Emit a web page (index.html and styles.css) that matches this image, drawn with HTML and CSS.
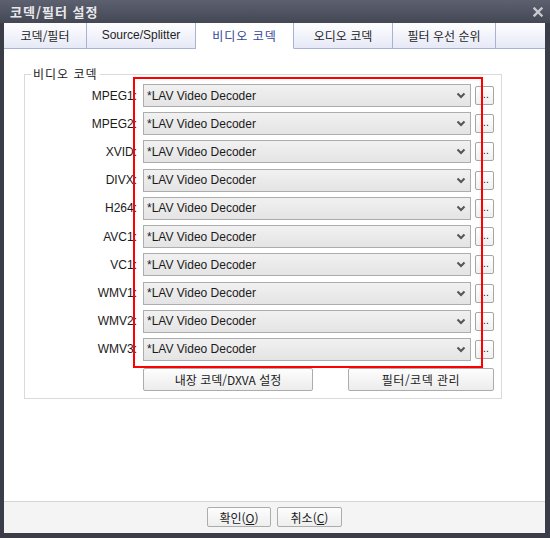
FILE: index.html
```html
<!DOCTYPE html>
<html lang="ko">
<head>
<meta charset="utf-8">
<title>코덱/필터 설정</title>
<link rel="stylesheet" href="styles.css">
</head>
<body>
<div class="window">
  <div class="titlebar">
    <span class="title">코덱/필터 설정</span>
    <svg class="close" width="10" height="10" viewBox="0 0 10 10"><path d="M1.5 1.5 L8.5 8.5 M8.5 1.5 L1.5 8.5" stroke="#c9cacf" stroke-width="2.4" stroke-linecap="square"/></svg>
  </div>
  <div class="frame">
    <div class="tabs">
      <div class="tab">코덱/필터</div>
      <div class="tab">Source/Splitter</div>
      <div class="tab active">비디오 코덱</div>
      <div class="tab">오디오 코덱</div>
      <div class="tab">필터 우선 순위</div>
      <div class="tab filler"></div>
    </div>
    <div class="page">
      <div class="group">
        <span class="legend">비디오 코덱</span>
        <div class="rows">
          <span class="label">MPEG1:</span><div class="combo"><span>*LAV Video Decoder</span><svg class="chev" width="10" height="7" viewBox="0 0 10 7"><path d="M1.5 1.5 L5 5 L8.5 1.5" fill="none" stroke="#555" stroke-width="2"/></svg></div><div class="more">...</div>
          <span class="label">MPEG2:</span><div class="combo"><span>*LAV Video Decoder</span><svg class="chev" width="10" height="7" viewBox="0 0 10 7"><path d="M1.5 1.5 L5 5 L8.5 1.5" fill="none" stroke="#555" stroke-width="2"/></svg></div><div class="more">...</div>
          <span class="label">XVID:</span><div class="combo"><span>*LAV Video Decoder</span><svg class="chev" width="10" height="7" viewBox="0 0 10 7"><path d="M1.5 1.5 L5 5 L8.5 1.5" fill="none" stroke="#555" stroke-width="2"/></svg></div><div class="more">...</div>
          <span class="label">DIVX:</span><div class="combo"><span>*LAV Video Decoder</span><svg class="chev" width="10" height="7" viewBox="0 0 10 7"><path d="M1.5 1.5 L5 5 L8.5 1.5" fill="none" stroke="#555" stroke-width="2"/></svg></div><div class="more">...</div>
          <span class="label">H264:</span><div class="combo"><span>*LAV Video Decoder</span><svg class="chev" width="10" height="7" viewBox="0 0 10 7"><path d="M1.5 1.5 L5 5 L8.5 1.5" fill="none" stroke="#555" stroke-width="2"/></svg></div><div class="more">...</div>
          <span class="label">AVC1:</span><div class="combo"><span>*LAV Video Decoder</span><svg class="chev" width="10" height="7" viewBox="0 0 10 7"><path d="M1.5 1.5 L5 5 L8.5 1.5" fill="none" stroke="#555" stroke-width="2"/></svg></div><div class="more">...</div>
          <span class="label">VC1:</span><div class="combo"><span>*LAV Video Decoder</span><svg class="chev" width="10" height="7" viewBox="0 0 10 7"><path d="M1.5 1.5 L5 5 L8.5 1.5" fill="none" stroke="#555" stroke-width="2"/></svg></div><div class="more">...</div>
          <span class="label">WMV1:</span><div class="combo"><span>*LAV Video Decoder</span><svg class="chev" width="10" height="7" viewBox="0 0 10 7"><path d="M1.5 1.5 L5 5 L8.5 1.5" fill="none" stroke="#555" stroke-width="2"/></svg></div><div class="more">...</div>
          <span class="label">WMV2:</span><div class="combo"><span>*LAV Video Decoder</span><svg class="chev" width="10" height="7" viewBox="0 0 10 7"><path d="M1.5 1.5 L5 5 L8.5 1.5" fill="none" stroke="#555" stroke-width="2"/></svg></div><div class="more">...</div>
          <span class="label">WMV3:</span><div class="combo"><span>*LAV Video Decoder</span><svg class="chev" width="10" height="7" viewBox="0 0 10 7"><path d="M1.5 1.5 L5 5 L8.5 1.5" fill="none" stroke="#555" stroke-width="2"/></svg></div><div class="more">...</div>
        </div>
        <div class="actions">
          <div class="btn btn-wide">내장 코덱/DXVA 설정</div>
          <div class="btn btn-mid">필터/코덱 관리</div>
        </div>
        <div class="highlight"></div>
      </div>
    </div>
    <div class="footer">
      <div class="btn btn-ok">확인(<u>O</u>)</div>
      <div class="btn btn-cancel">취소(<u>C</u>)</div>
    </div>
  </div>
</div>
</body>
</html>
```
FILE: styles.css
```css
* { box-sizing: border-box; }
html, body { margin: 0; padding: 0; background: #3a3c48; }
body {
  font-family: "Liberation Sans", "Noto Sans CJK KR", sans-serif;
  font-size: 12px;
  color: #1b1b1b;
}
.window {
  width: 550px;
  height: 538px;
  display: flex;
  flex-direction: column;
  background: #3a3c48;
}
.titlebar {
  height: 23px;
  flex: none;
  display: flex;
  align-items: center;
  justify-content: space-between;
  padding: 0 7px 0 10px;
  background: linear-gradient(#5d606f, #444754);
}
.title {
  font-family: "Noto Sans CJK KR", sans-serif;
  font-weight: bold;
  font-size: 13px;
  color: #e9e9ec;
  letter-spacing: 1px;
}
.close { display: block; margin-top: 1px; }
.frame {
  flex: 1;
  display: flex;
  flex-direction: column;
  margin: 0 5px 5px 4px;
  background: #ffffff;
}
.tabs {
  height: 26px;
  flex: none;
  display: grid;
  grid-template-columns: 83px 109px 98px 99px 103px 1fr;
  background: linear-gradient(#fefeff, #e5e8f6);
}
.tab {
  display: flex;
  align-items: center;
  justify-content: center;
  border-right: 1px solid #a9b1d4;
  border-bottom: 1px solid #a9b1d4;
  font-family: "Noto Sans CJK KR", "Liberation Sans", sans-serif;
  font-size: 12px;
  color: #1f1f1f;
  padding-bottom: 1px;
  white-space: nowrap;
}
.tab:nth-child(2) { font-family: "Liberation Sans", "Noto Sans CJK KR", sans-serif; }
.tab.active {
  background: #ffffff;
  border-bottom-color: #ffffff;
  color: #33479c;
  letter-spacing: 1px;
}
.tab.filler { border-right: none; }
.page {
  height: 452px;
  flex: none;
  padding: 25px 0 0 20px;
}
.group {
  position: relative;
  width: 478px;
  height: 325px;
  border: 1px solid #dadada;
  padding: 9px 0 0 0;
}
.legend {
  position: absolute;
  top: -9px;
  left: 6px;
  padding: 0 2px;
  background: #ffffff;
  font-family: "Noto Sans CJK KR", sans-serif;
  font-size: 12px;
  line-height: 16px;
  letter-spacing: 1px;
  color: #1b1b1b;
}
.rows {
  display: grid;
  grid-template-columns: 113px 329px 19px;
  column-gap: 4px;
  row-gap: 5.23px;
  grid-auto-rows: 23px;
  align-items: center;
}
.label {
  text-align: right;
  margin-right: 1px;
  font-size: 12px;
}
.combo {
  height: 23px;
  border: 1px solid #adadad;
  background: linear-gradient(#f1f1f1, #e4e4e4);
  display: flex;
  align-items: center;
  justify-content: space-between;
  padding: 0 4px 0 3px;
  margin-left: 1px;
  font-size: 12px;
  color: #1b1b1b;
}
.chev { display: block; }
.more {
  width: 19px;
  height: 19px;
  border: 1px solid #a5a5a5;
  border-radius: 2px;
  background: linear-gradient(#ffffff, #f0f0f0);
  display: flex;
  align-items: flex-end;
  justify-content: center;
  padding-bottom: 4px;
  font-size: 10px;
  line-height: 10px;
  color: #111;
  letter-spacing: 0;
}
.actions {
  display: flex;
  gap: 35px;
  padding-left: 118px;
  margin-top: 7px;
}
.btn {
  height: 23px;
  border: 1px solid #acacac;
  border-radius: 2px;
  background: linear-gradient(#fdfdfd, #ececec);
  display: flex;
  align-items: center;
  justify-content: center;
  font-family: "Noto Sans CJK KR", "Liberation Sans", sans-serif;
  font-size: 12px;
  color: #1b1b1b;
}
.btn-wide { width: 170px; }
.btn-mid { width: 146px; letter-spacing: 0.5px; }
.highlight {
  position: absolute;
  left: 108px;
  top: 2px;
  width: 350px;
  height: 291px;
  border: 2px solid #ff0000;
  pointer-events: none;
}
.footer {
  flex: 1;
  border-top: 1px solid #d5d5d5;
  background: #f4f4f4;
  display: flex;
  justify-content: center;
  align-items: flex-start;
  gap: 6px;
  padding-top: 5px;
}
.footer .btn { height: 20px; background: linear-gradient(#fdfdfd, #eeeeee); }
.btn-ok { width: 64px; }
.btn-cancel { width: 65px; }
.btn u { text-decoration: underline; }
```
